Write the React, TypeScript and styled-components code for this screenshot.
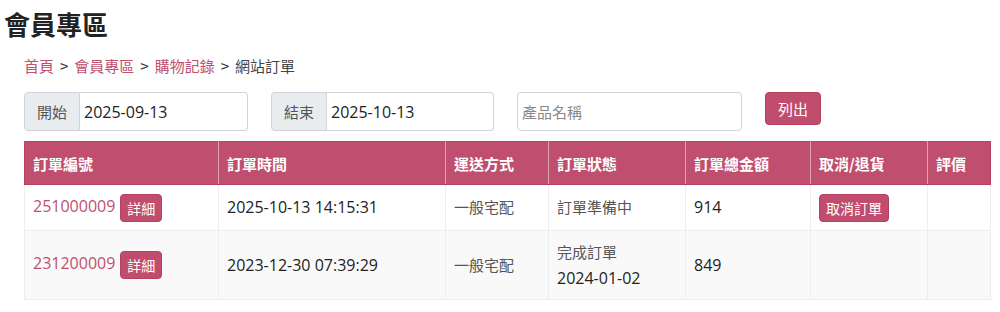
import React from "react";
import styled, { createGlobalStyle } from "styled-components";

const Global = createGlobalStyle`
  html, body { margin: 0; padding: 0; background: #fff; }
  body {
    font-family: "Open Sans", "Noto Sans CJK TC", sans-serif;
    font-size: 15px;
    color: #333;
  }
  * { box-sizing: border-box; }
`;

const Page = styled.div`
  padding: 0 10px 0 4px;
`;

const Title = styled.h1`
  margin: 0;
  padding-top: 7px;
  font-size: 26px;
  font-weight: 700;
  line-height: 34px;
  color: #222;
  font-family: "Noto Sans CJK TC", sans-serif;
`;

const Inner = styled.div`
  padding-left: 20px;
`;

const Crumbs = styled.nav`
  margin-top: 13px;
  display: flex;
  gap: 6px;
  font-size: 15px;
  line-height: 24px;
  font-family: "Noto Sans CJK TC", sans-serif;
`;

const Crumb = styled.a<{ $current?: boolean }>`
  color: ${(p) => (p.$current ? "#444" : "#c0506e")};
  text-decoration: none;
`;

const Sep = styled.span`
  color: #333;
`;

const Filters = styled.div`
  margin-top: 14px;
  display: flex;
  align-items: flex-start;
  gap: 23px;
`;

const Group = styled.div<{ $w: number }>`
  display: flex;
  width: ${(p) => p.$w}px;
  height: 39px;
`;

const Addon = styled.span`
  display: flex;
  align-items: center;
  padding: 0 12px;
  background: #e9ecef;
  border: 1px solid #ced4da;
  border-radius: 4px 0 0 4px;
  color: #555;
  font-family: "Noto Sans CJK TC", sans-serif;
  font-size: 15px;
`;

const Input = styled.input<{ $alone?: boolean }>`
  flex: 1;
  min-width: 0;
  height: 39px;
  border: 1px solid #ced4da;
  border-left: ${(p) => (p.$alone ? "1px solid #ced4da" : "none")};
  border-radius: ${(p) => (p.$alone ? "4px" : "0 4px 4px 0")};
  padding: 0 4px;
  font-family: "Open Sans", "Noto Sans CJK TC", sans-serif;
  font-size: 16px;
  color: #222;
  outline: none;
  &::placeholder { color: #888; font-size: 15px; }
`;

const Btn = styled.button<{ $size?: "sm" | "md" }>`
  background: #c04d6d;
  color: #fff;
  border: 1px solid #b3415f;
  border-radius: 4px;
  font-family: "Noto Sans CJK TC", sans-serif;
  font-size: ${(p) => (p.$size === "sm" ? "14px" : "15px")};
  height: ${(p) => (p.$size === "sm" ? "28px" : "33px")};
  padding: ${(p) => (p.$size === "sm" ? "0 6px" : "0 12px")};
  line-height: 1;
  cursor: pointer;
  vertical-align: middle;
`;

const Table = styled.table`
  margin-top: 10px;
  width: 966px;
  border-collapse: collapse;
  table-layout: fixed;
`;

const Th = styled.th<{ $w: number }>`
  width: ${(p) => p.$w}px;
  background: #c04e6e;
  color: #fff;
  text-align: left;
  font-weight: 700;
  font-family: "Noto Sans CJK TC", sans-serif;
  font-size: 15px;
  height: 43px;
  padding: 0 8px;
  border: 1px solid #e0a2b3;
  border-top-color: #b8435f;
  border-bottom-color: #b8435f;
  &:first-child { border-left-color: #b8435f; }
  &:last-child { border-right-color: #b8435f; }
`;

const Tr = styled.tr<{ $alt?: boolean }>`
  background: ${(p) => (p.$alt ? "#f9f9f9" : "#fff")};
`;

const Td = styled.td`
  padding: 8px 8px;
  border: 1px solid #eee;
  line-height: 26px;
  vertical-align: middle;
  font-family: "Open Sans", "Noto Sans CJK TC", sans-serif;
  font-size: 16px;
  color: #222;
`;

const OrderNo = styled.a`
  color: #c0506e;
  text-decoration: none;
  margin-right: 5px;
`;

const Muted = styled.span`
  color: #555;
  font-size: 15px;
  font-family: "Noto Sans CJK TC", sans-serif;
`;

const cols: [string, number][] = [
  ["訂單編號", 194],
  ["訂單時間", 227],
  ["運送方式", 103],
  ["訂單狀態", 137],
  ["訂單總金額", 125],
  ["取消/退貨", 117],
  ["評價", 63],
];

export default function App() {
  return (
    <>
      <Global />
      <Page>
        <Title>會員專區</Title>
        <Inner>
          <Crumbs>
            <Crumb href="#">首頁</Crumb>
            <Sep>&gt;</Sep>
            <Crumb href="#">會員專區</Crumb>
            <Sep>&gt;</Sep>
            <Crumb href="#">購物記錄</Crumb>
            <Sep>&gt;</Sep>
            <Crumb $current>網站訂單</Crumb>
          </Crumbs>
          <Filters>
            <Group $w={224}>
              <Addon>開始</Addon>
              <Input defaultValue="2025-09-13" />
            </Group>
            <Group $w={223}>
              <Addon>結束</Addon>
              <Input defaultValue="2025-10-13" />
            </Group>
            <Group $w={225}>
              <Input $alone placeholder="產品名稱" />
            </Group>
            <Btn>列出</Btn>
          </Filters>
          <Table>
            <thead>
              <tr>
                {cols.map(([t, w]) => (
                  <Th key={t} $w={w}>
                    {t}
                  </Th>
                ))}
              </tr>
            </thead>
            <tbody>
              <Tr>
                <Td>
                  <OrderNo href="#">251000009</OrderNo>
                  <Btn $size="sm">詳細</Btn>
                </Td>
                <Td>2025-10-13 14:15:31</Td>
                <Td><Muted>一般宅配</Muted></Td>
                <Td><Muted>訂單準備中</Muted></Td>
                <Td>914</Td>
                <Td><Btn $size="sm">取消訂單</Btn></Td>
                <Td></Td>
              </Tr>
              <Tr $alt>
                <Td>
                  <OrderNo href="#">231200009</OrderNo>
                  <Btn $size="sm">詳細</Btn>
                </Td>
                <Td>2023-12-30 07:39:29</Td>
                <Td><Muted>一般宅配</Muted></Td>
                <Td>
                  <Muted>完成訂單</Muted>
                  <br />
                  2024-01-02
                </Td>
                <Td>849</Td>
                <Td></Td>
                <Td></Td>
              </Tr>
            </tbody>
          </Table>
        </Inner>
      </Page>
    </>
  );
}
